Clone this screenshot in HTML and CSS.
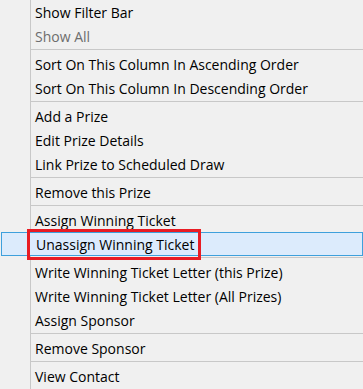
FILE: index.html
```html
<!DOCTYPE html>
<html lang="en">
<head>
  <meta charset="UTF-8" />
  <title>Prize Menu</title>
  <link rel="stylesheet" href="styles.css">
</head>
<body>

<div class="menu">
  <div class="item">Show Filter Bar</div>
  <div class="item disabled">Show All</div>
  <div class="sep"></div>
  <div class="item">Sort On This Column In Ascending Order</div>
  <div class="item">Sort On This Column In Descending Order</div>
  <div class="sep"></div>
  <div class="item">Add a Prize</div>
  <div class="item">Edit Prize Details</div>
  <div class="item">Link Prize to Scheduled Draw</div>
  <div class="sep"></div>
  <div class="item">Remove this Prize</div>
  <div class="sep"></div>
  <div class="item">Assign Winning Ticket</div>
  <div class="item hover"><span class="callout">Unassign Winning Ticket</span></div>
  <div class="sep"></div>
  <div class="item">Write Winning Ticket Letter (this Prize)</div>
  <div class="item">Write Winning Ticket Letter (All Prizes)</div>
  <div class="item">Assign Sponsor</div>
  <div class="sep"></div>
  <div class="item">Remove Sponsor</div>
  <div class="sep"></div>
  <div class="item">View Contact</div>
</div>

</body>
</html>
```

FILE: styles.css
```css
* { box-sizing: border-box; }

body {
  margin: 0;
  background: #f0f0f0;
  font-family: 'Segoe UI', 'Open Sans', 'Noto Sans', sans-serif;
  font-size: 14px;
  color: #000;
}

.menu {
  position: relative;
  min-height: 389px;
  background: linear-gradient(to right, transparent 30px, #c8c8c8 30px, #c8c8c8 31px, transparent 31px);
}

.item {
  height: 24px;
  line-height: 25px;
  padding-left: 35px;
  white-space: nowrap;
}

.item.disabled { color: #6d6d6d; }

.item.hover {
  margin-left: 1px;
  padding-left: 34px;
  background: #dcebfc;
  border: 1px solid #3ea0dc;
  line-height: 23px;
}

.sep {
  height: 4px;
  margin-left: 31px;
  padding-top: 1px;
}

.sep::before {
  content: "";
  display: block;
  height: 1px;
  background: #c8c8c8;
}

.callout {
  position: relative;
  display: inline-block;
}

.callout::after {
  content: "";
  position: absolute;
  left: -9px;
  right: -7px;
  top: -4px;
  bottom: -4px;
  border: 3px solid #e81c24;
}
```
